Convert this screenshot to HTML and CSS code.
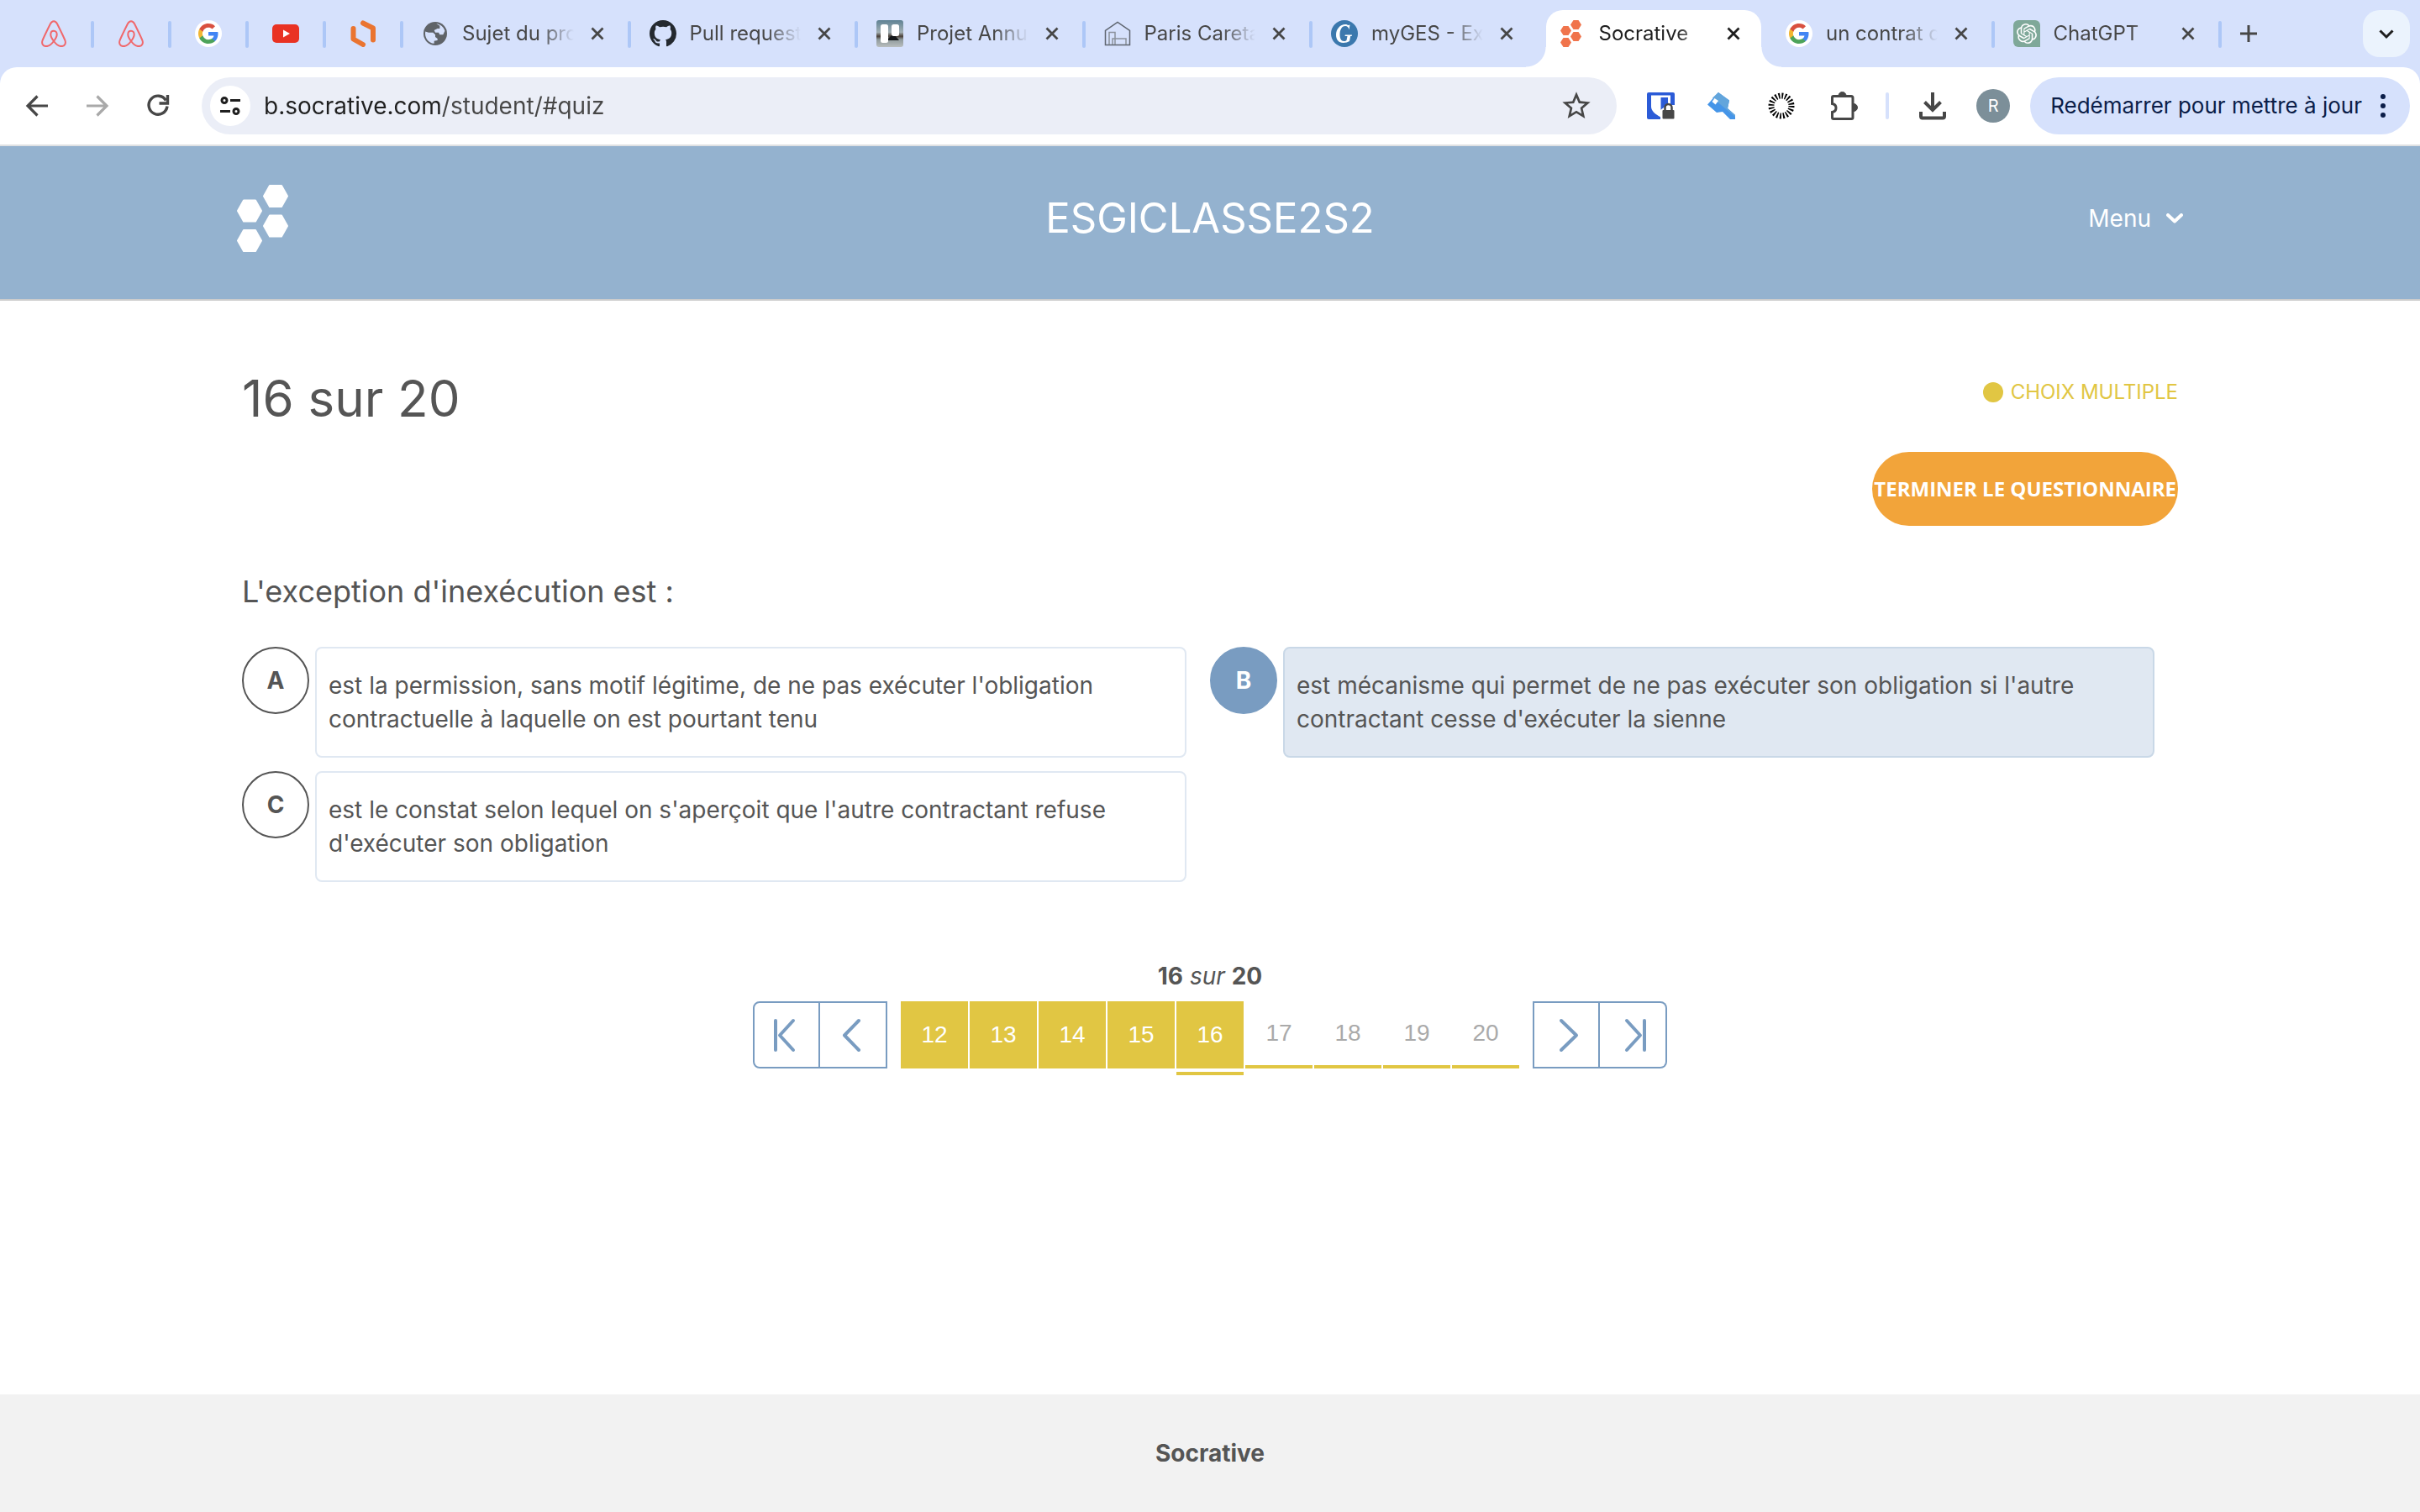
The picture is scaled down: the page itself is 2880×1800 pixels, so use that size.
FILE: index.html
```html
<!DOCTYPE html>
<html lang="fr">
<head>
<meta charset="utf-8">
<meta name="viewport" content="width=device-width, initial-scale=1">
<title>Socrative</title>
<link rel="stylesheet" href="styles.css">
</head>
<body>
<svg class="sprite" aria-hidden="true">
  <symbol id="i-close" viewBox="0 0 16 16"><path d="M1.5 1.5l13 13M14.5 1.5l-13 13" fill="none" stroke="currentColor" stroke-width="2.8"/></symbol>
  <symbol id="i-airbnb" viewBox="0 0 32 32"><path d="M16 1.200c-2 0-3.100 1.300-4 3.100C9.500 9.300 4.500 19.500 2.600 24c-1.400 3.700.4 7 4.400 7.100 3.600 0 6.800-3.100 9-6.100 2.300-3 3.700-5.600 3.700-8.100 0-2.400-1.500-4.200-3.700-4.200s-3.700 1.800-3.700 4.200c0 2.500 1.400 5.100 3.700 8.100 2.200 3 5.400 6.100 9 6.100 4-.1 5.800-3.400 4.400-7.100C27.500 19.500 22.500 9.300 20 4.300c-.9-1.800-2-3.100-4-3.100z" fill="none" stroke="#f0686c" stroke-width="2"/></symbol>
  <symbol id="i-google" viewBox="0 0 32 32"><circle cx="16" cy="16" r="16" fill="#fff"/><g transform="translate(4 4)"><path fill="#4285f4" d="M23.500 12.300c0-.8-.1-1.600-.2-2.300H12v4.500h6.500c-.3 1.500-1.100 2.700-2.400 3.600v3h3.900c2.200-2.100 3.500-5.200 3.500-8.800z"/><path fill="#4da35a" d="M12 24c3.200 0 6-1.100 8-2.900l-3.900-3c-1.100.7-2.500 1.200-4.100 1.200-3.100 0-5.800-2.100-6.700-5H1.300v3.100C3.300 21.300 7.300 24 12 24z"/><path fill="#f2b632" d="M5.300 14.300c-.3-.7-.4-1.500-.4-2.300s.1-1.600.4-2.300V6.600h-4C.5 8.200 0 10.100 0 12s.5 3.800 1.300 5.400z"/><path fill="#d9503f" d="M12 4.800c1.800 0 3.300.6 4.600 1.800l3.400-3.400C18 1.200 15.200 0 12 0 7.300 0 3.300 2.700 1.300 6.600l4 3.100c.9-2.800 3.600-4.900 6.700-4.900z"/></g></symbol>
</svg>

<header class="browser">
  <nav class="tabstrip" aria-label="Onglets">
    <ul class="tabs">
      <li class="tab pinned"><a href="#t1" aria-label="Airbnb"><svg class="fav"><use href="#i-airbnb"/></svg></a></li>
      <li class="tab pinned"><a href="#t2" aria-label="Airbnb"><svg class="fav"><use href="#i-airbnb"/></svg></a></li>
      <li class="tab pinned"><a href="#t3" aria-label="Google"><svg class="fav"><use href="#i-google"/></svg></a></li>
      <li class="tab pinned"><a href="#t4" aria-label="YouTube"><svg class="fav" viewBox="0 0 32 32"><rect y="5" width="32" height="22" rx="5" fill="#e93223"/><path d="M13 11.500v9l8-4.500z" fill="#fff"/></svg></a></li>
      <li class="tab pinned"><a href="#t5" aria-label="Outil"><svg class="fav" viewBox="0 0 32 32"><path d="M16 3l12 6v14" fill="none" stroke="#ea7430" stroke-width="6" stroke-linecap="round" stroke-linejoin="round" transform="translate(0 .5)"/><path d="M4.500 10v12.500l11.500 6.500" fill="none" stroke="#ea7430" stroke-width="6" stroke-linecap="round" stroke-linejoin="round"/></svg></a></li>
      <li class="tab"><a href="#t6"><svg class="fav" viewBox="0 0 24 24"><circle cx="12" cy="12" r="10.500" fill="#5f6368"/><path fill="#d6e1fc" d="M11 20.900c-4.500-.5-8-4.200-8-8.900 0-.6.100-1.200.2-1.800L6 11h4l2 2v2l2 1.500V18l-3 .5zM13 3.200c3.600.4 6.600 3 7.600 6.400L19 13h-3l-1-2h-3l-1-2 3-1.500h2V5z"/></svg><span class="title">Sujet du projet</span></a><button class="close" aria-label="Fermer"><svg><use href="#i-close"/></svg></button></li>
      <li class="tab"><a href="#t7"><svg class="fav" viewBox="0 0 16 16"><path fill="#24292f" d="M8 0C3.580 0 0 3.580 0 8c0 3.540 2.290 6.530 5.470 7.590.4.070.55-.17.55-.38 0-.19-.010-.82-.010-1.490-2.010.37-2.530-.49-2.690-.94-.09-.23-.48-.94-.82-1.130-.28-.15-.68-.52-.010-.53.63-.010 1.080.58 1.230.82.72 1.210 1.870.87 2.330.66.070-.52.28-.87.510-1.070-1.780-.2-3.640-.89-3.640-3.950 0-.87.310-1.590.82-2.150-.08-.2-.36-1.020.08-2.120 0 0 .67-.21 2.200.82.64-.18 1.320-.27 2-.27s1.360.09 2 .27c1.530-1.040 2.200-.82 2.200-.82.44 1.100.16 1.920.08 2.120.51.56.82 1.270.82 2.150 0 3.070-1.870 3.750-3.650 3.950.29.25.54.73.54 1.480 0 1.070-.010 1.930-.010 2.200 0 .21.150.46.55.38A8.013 8.013 0 0 0 16 8c0-4.420-3.580-8-8-8z"/></svg><span class="title">Pull requests</span></a><button class="close" aria-label="Fermer"><svg><use href="#i-close"/></svg></button></li>
      <li class="tab"><a href="#t8"><svg class="fav" viewBox="0 0 32 32"><defs><linearGradient id="sky" x2="0" y2="1"><stop offset="0" stop-color="#5f8294"/><stop offset=".45" stop-color="#a3b0b4"/><stop offset=".6" stop-color="#4a4038"/><stop offset=".72" stop-color="#8f9a9c"/><stop offset="1" stop-color="#b9bebf"/></linearGradient></defs><rect width="32" height="32" rx="3" fill="url(#sky)"/><path d="M12 24l8-8 7 8z" fill="#15181a"/><rect x="5" y="5" width="9" height="22" rx="2.500" fill="#fff"/><rect x="18" y="5" width="9" height="14" rx="2.500" fill="#fff"/></svg><span class="title">Projet Annuel</span></a><button class="close" aria-label="Fermer"><svg><use href="#i-close"/></svg></button></li>
      <li class="tab"><a href="#t9"><svg class="fav" viewBox="0 0 32 32" fill="none"><path d="M1.500 29.500V12.500L16 2.500l14.500 10v17z" stroke="#5f6670" stroke-width="1.500"/><path d="M6 29V14.500h7V29M10 29v-7h16v7" stroke="#8b919b" stroke-width="1.500"/></svg><span class="title">Paris Caretaker</span></a><button class="close" aria-label="Fermer"><svg><use href="#i-close"/></svg></button></li>
      <li class="tab before-active"><a href="#t10"><svg class="fav" viewBox="0 0 32 32"><circle cx="16" cy="16" r="16" fill="#3b78ad"/><path d="M22.500 5.500l-1 6c-.5-3-2-4.500-4.500-4.500-4.500 0-6.500 5-6.500 10 0 4.500 1.500 8 5 8 1.500 0 2.500-.5 3-1l1-5h-3l.3-1.500h8.200l-.3 1.500h-1.500l-1.200 6c-2 1.200-4.500 2-7.500 2-5.500 0-8.500-4-8.500-9.500 0-7 5-12.500 11-12.500 1.500 0 2.500.5 3.500 1z" fill="#fff"/></svg><span class="title">myGES - Extranet</span></a><button class="close" aria-label="Fermer"><svg><use href="#i-close"/></svg></button></li>
      <li class="tab active"><a href="#t11" aria-current="page"><svg class="fav" viewBox="0 0 32 32" fill="#f0744c"><path d="M15.500 0h6l3.500 5.500-3.500 5.500h-6L12 5.500zM15.500 14h6l3.500 5.500-3.500 5.500h-6L12 19.500z" transform="translate(2)"/><path d="M5.500 7h6l3.500 5.500-3.500 5.500h-6L2 12.500zM5.500 21h6l3.500 5.500-3.500 5.500h-6L2 26.500z"/></svg><span class="title">Socrative</span></a><button class="close" aria-label="Fermer"><svg><use href="#i-close"/></svg></button></li>
      <li class="tab"><a href="#t12"><svg class="fav"><use href="#i-google"/></svg><span class="title">un contrat de</span></a><button class="close" aria-label="Fermer"><svg><use href="#i-close"/></svg></button></li>
      <li class="tab"><a href="#t13"><svg class="fav" viewBox="0 0 32 32"><path d="M6 0h20a6 6 0 0 1 6 6v26H6a6 6 0 0 1-6-6V6a6 6 0 0 1 6-6z" fill="#7fa899"/><path transform="translate(4 4)" fill="#fff" d="M22.282 9.821a5.985 5.985 0 0 0-.516-4.911 6.046 6.046 0 0 0-6.510-2.900A6.065 6.065 0 0 0 4.981 4.182a5.985 5.985 0 0 0-3.998 2.900 6.046 6.046 0 0 0 .743 7.097 5.980 5.980 0 0 0 .511 4.911 6.051 6.051 0 0 0 6.515 2.900A5.985 5.985 0 0 0 13.260 24a6.056 6.056 0 0 0 5.772-4.206 5.989 5.989 0 0 0 3.998-2.900 6.056 6.056 0 0 0-.748-7.073zm-9.022 12.608a4.475 4.475 0 0 1-2.876-1.041l.142-.080 4.778-2.758a.795.795 0 0 0 .393-.681v-6.737l2.020 1.169a.071.071 0 0 1 .038.052v5.583a4.504 4.504 0 0 1-4.495 4.494zm-9.661-4.125a4.471 4.471 0 0 1-.535-3.014l.142.085 4.783 2.758a.771.771 0 0 0 .781 0l5.843-3.368v2.332a.080.080 0 0 1-.033.062L9.740 19.950a4.499 4.499 0 0 1-6.141-1.646zM2.341 7.896a4.485 4.485 0 0 1 2.366-1.973V11.600a.766.766 0 0 0 .388.677l5.814 3.354-2.020 1.169a.076.076 0 0 1-.071 0l-4.830-2.787A4.504 4.504 0 0 1 2.341 7.872zm16.596 3.856L13.104 8.364 15.119 7.200a.076.076 0 0 1 .071 0l4.830 2.791a4.494 4.494 0 0 1-.677 8.104v-5.677a.790.790 0 0 0-.407-.667zm2.011-3.023l-.142-.085-4.774-2.782a.776.776 0 0 0-.785 0L9.409 9.230V6.897a.066.066 0 0 1 .028-.062l4.830-2.787a4.499 4.499 0 0 1 6.680 4.660zM8.307 12.863l-2.020-1.164a.080.080 0 0 1-.038-.057V6.074a4.499 4.499 0 0 1 7.376-3.454l-.142.081L8.704 5.459a.795.795 0 0 0-.393.681zm1.098-2.365l2.602-1.500 2.607 1.500v2.999l-2.597 1.500-2.607-1.500z"/></svg><span class="title">ChatGPT</span></a><button class="close" aria-label="Fermer"><svg><use href="#i-close"/></svg></button></li>
    </ul>
    <button class="new-tab" aria-label="Nouvel onglet"><svg viewBox="0 0 20 20"><path d="M10 0v20M0 10h20" stroke="currentColor" stroke-width="3"/></svg></button>
    <button class="tab-search" aria-label="Rechercher dans les onglets"><svg viewBox="0 0 20 20"><path d="M2.500 6.500l7.500 7.500 7.500-7.500" fill="none" stroke="#1f1f1f" stroke-width="3"/></svg></button>
  </nav>

  <div class="toolbar">
    <button class="tool" aria-label="Retour"><svg viewBox="0 0 40 40"><path d="M33 20H9M20.500 8.500L9 20l11.500 11.500" fill="none" stroke="#474747" stroke-width="3.200"/></svg></button>
    <button class="tool" aria-label="Avancer"><svg viewBox="0 0 40 40"><path d="M7 20h24M19.500 8.500L31 20 19.500 31.500" fill="none" stroke="#a9a9a9" stroke-width="3.200"/></svg></button>
    <button class="tool" aria-label="Actualiser"><svg viewBox="0 0 40 40"><path d="M29.500 13.500A11 11 0 1 0 31 20.500" fill="none" stroke="#474747" stroke-width="3.400"/><path d="M31.500 7v10h-10" fill="none" stroke="#474747" stroke-width="3.400"/></svg></button>
    <div class="omnibox">
      <button class="site-info" aria-label="Informations sur le site"><svg viewBox="0 0 24 24" fill="none" stroke="#1f1f1f" stroke-width="3"><circle cx="5" cy="5.500" r="3"/><path d="M12 5.500h12M0 18.500h12"/><circle cx="19" cy="18.500" r="3"/></svg></button>
      <input class="url" type="text" value="b.socrative.com/student/#quiz" aria-label="Adresse">
      <button class="star" aria-label="Ajouter aux favoris"><svg viewBox="0 0 24 24"><path fill="#474747" d="M22 9.240l-7.190-.62L12 2 9.190 8.630 2 9.240l5.460 4.730L5.820 21 12 17.270 18.180 21l-1.630-7.030zM12 15.400l-3.760 2.270 1-4.280-3.320-2.880 4.380-.38L12 6.100l1.710 4.040 4.380.38-3.320 2.880 1 4.280z"/></svg></button>
    </div>
    <div class="extensions">
      <button class="tool" aria-label="Bitwarden"><svg viewBox="0 0 40 40"><rect x="4" y="4" width="33" height="32" rx="2" fill="#2b5bd7"/><path d="M9 7.500h23v13c0 6-5 10-11.500 13C14 30 9 26.500 9 20.500z" fill="#fff"/><path d="M20.500 10H29v10.500c0 4-3.500 7-8.500 9.500z" fill="#2b5bd7"/><path d="M20 37V25l8-6h9v18z" fill="#fff"/><path d="M25.500 26v-4a4 4 0 0 1 8 0v4" fill="none" stroke="#474747" stroke-width="2.500"/><rect x="22.500" y="25" width="14" height="10.500" rx="1" fill="#474747"/></svg></button>
      <button class="tool" aria-label="Extension clé"><svg viewBox="0 0 40 40"><path d="M17 4l13 9.500-2 9.500 9 8v5h-6l-9-9-7 1L4 18.500z" fill="#4595e8"/><path d="M17 4l13 9.500-2 9.500 9 8v2L10 10.500z" fill="#62a5dc"/><path d="M12.500 11l4.500 3-3.500 4.500L9.500 15z" fill="#fff"/></svg></button>
      <button class="tool" aria-label="Extension soleil"><svg viewBox="0 0 40 40"><circle cx="20" cy="20" r="12" fill="none" stroke="#000" stroke-width="7" stroke-dasharray="1.800 1.970"/></svg></button>
      <button class="tool" aria-label="Extensions"><svg viewBox="0 0 40 40"><path d="M10 8.500h21a2 2 0 0 1 2 2V34a1.500 1.500 0 0 1-1.500 1.500H10A1.500 1.500 0 0 1 8.500 34v-6.500c3-.5 4.500-2.500 4.500-5s-1.500-4.500-4.500-5V10A1.500 1.500 0 0 1 10 8.500z" fill="none" stroke="#474747" stroke-width="3"/><path d="M16 8a4.500 4.500 0 0 1 9 0zM34 17.500a4.500 4.500 0 0 1 0 9z" fill="#474747" stroke="#474747"/></svg></button>
    </div>
    <div class="divider"></div>
    <button class="tool" aria-label="Téléchargements"><svg viewBox="0 0 40 40"><path d="M20 4v20M10.500 15.500L20 25l9.500-9.500M6 27v5.500a2 2 0 0 0 2 2h24a2 2 0 0 0 2-2V27" fill="none" stroke="#474747" stroke-width="4"/></svg></button>
    <button class="avatar" aria-label="Profil">R</button>
    <button class="restart">Redémarrer pour mettre à jour<svg viewBox="0 0 6 28" fill="#0b1d48"><circle cx="3" cy="3" r="3"/><circle cx="3" cy="14" r="3"/><circle cx="3" cy="25" r="3"/></svg></button>
  </div>
</header>

<div class="room-bar">
  <a class="logo" href="#home" aria-label="Socrative"><svg viewBox="0 0 62 80" fill="#fff" stroke="#fff" stroke-width="2" stroke-linejoin="round"><path d="M39 1h14l7 12.500-7 12.500H39l-7-12.500zM39 36.500h14L60 49l-7 12.500H39L32 49zM8 18.500h14L29 31l-7 12.500H8L1 31zM8 54h14l7 12.500L22 79H8L1 66.500z"/></svg></a>
  <h1 class="room-name">ESGICLASSE2S2</h1>
  <button class="menu">Menu<svg viewBox="0 0 20 12"><path d="M2 2l8 7.500L18 2" fill="none" stroke="#fff" stroke-width="4" stroke-linecap="round" stroke-linejoin="round"/></svg></button>
</div>

<main class="quiz">
  <div class="quiz-head">
    <h2 class="progress">16 sur 20</h2>
    <div class="quiz-side">
      <p class="kind">CHOIX MULTIPLE</p>
      <button class="finish">TERMINER LE QUESTIONNAIRE</button>
    </div>
  </div>

  <form>
    <fieldset class="question">
      <legend>L'exception d'inexécution est :</legend>
      <div class="answers">
        <label class="answer"><input type="radio" name="answer"><span class="letter">A</span><span class="answer-text">est la permission, sans motif légitime, de ne pas exécuter l'obligation contractuelle à laquelle on est pourtant tenu</span></label>
        <label class="answer"><input type="radio" name="answer" checked><span class="letter">B</span><span class="answer-text">est mécanisme qui permet de ne pas exécuter son obligation si l'autre contractant cesse d'exécuter la sienne</span></label>
        <label class="answer"><input type="radio" name="answer"><span class="letter">C</span><span class="answer-text">est le constat selon lequel on s'aperçoit que l'autre contractant refuse d'exécuter son obligation</span></label>
      </div>
    </fieldset>
  </form>

  <nav class="pager" aria-label="Questions">
    <p class="pager-label"><b>16</b> <i>sur</i> <b>20</b></p>
    <div class="pager-row">
      <div class="jump start">
        <button aria-label="Première question"><svg viewBox="0 0 40 44"><path d="M7 5v35M28 5L12 22.500 28 40"/></svg></button>
        <button aria-label="Question précédente"><svg viewBox="0 0 40 44"><path d="M27 5L10 22.500 27 40"/></svg></button>
      </div>
      <div class="pages">
        <button class="page done">12</button>
        <button class="page done">13</button>
        <button class="page done">14</button>
        <button class="page done">15</button>
        <button class="page done current" aria-current="step">16</button>
        <button class="page">17</button>
        <button class="page">18</button>
        <button class="page">19</button>
        <button class="page">20</button>
      </div>
      <div class="jump end">
        <button aria-label="Question suivante"><svg viewBox="0 0 40 44"><path d="M14 5l18 17.500L14 40"/></svg></button>
        <button aria-label="Dernière question"><svg viewBox="0 0 40 44"><path d="M34 5v35M13 5l16 17.500L13 40"/></svg></button>
      </div>
    </div>
  </nav>
</main>

<footer class="footer">Socrative</footer>
</body>
</html>
```
FILE: styles.css
```css
* { box-sizing: border-box; }

html { height: 100%; }

body {
  margin: 0;
  min-height: 100%;
  display: flex;
  flex-direction: column;
  background: #fff;
  color: #555;
  font-family: Inter, "Liberation Sans", sans-serif;
  font-size: 28px;
  line-height: 40px;
}

button {
  margin: 0;
  padding: 0;
  border: 0;
  background: none;
  color: inherit;
  font: inherit;
  cursor: pointer;
}

svg { display: block; flex: none; }
h1, h2, p, ul, fieldset, legend { margin: 0; padding: 0; border: 0; font-weight: 400; }
ul { list-style: none; }
a { color: inherit; text-decoration: none; }
.sprite { display: none; }

/* Tab strip */
.browser { background: #d6e1fc; color: #474747; }

.tabstrip {
  display: flex;
  align-items: center;
  height: 80px;
  padding: 0 12px 0 20px;
}

.tabs { display: flex; flex: 1; min-width: 0; }

.tab {
  position: relative;
  display: flex;
  align-items: center;
  flex: 1 1 0;
  min-width: 0;
  height: 80px;
  padding: 0 24px 0 22px;
  font-size: 24px;
}

.tab.pinned { flex: 0 0 92px; padding: 0 32px 0 28px; }

.tab::after {
  content: "";
  position: absolute;
  right: 0;
  top: 25px;
  width: 4px;
  height: 32px;
  border-radius: 2px;
  background: #adc7f7;
}

.tab.active::after, .tab.before-active::after { display: none; }

.tab a {
  display: flex;
  align-items: center;
  gap: 16px;
  flex: 1;
  min-width: 0;
}

.fav { width: 32px; height: 32px; }

.title {
  flex: 1;
  min-width: 0;
  overflow: hidden;
  white-space: nowrap;
  -webkit-mask-image: linear-gradient(to left, transparent, #000 40px);
  mask-image: linear-gradient(to left, transparent, #000 40px);
}

.close {
  display: grid;
  place-items: center;
  width: 32px;
  height: 32px;
  margin-left: 12px;
}

.close svg { width: 16px; height: 16px; }

.active { color: #1f1f1f; z-index: 1; }

.active::before {
  content: "";
  position: absolute;
  z-index: -1;
  inset: 12px 7px 0;
  border-radius: 20px 20px 0 0;
  background: #fff;
}

.active a::before, .active a::after {
  content: "";
  position: absolute;
  z-index: -1;
  bottom: 0;
  width: 24px;
  height: 24px;
}

.active a::before {
  left: -17px;
  background: radial-gradient(circle at 0 0, transparent 23px, #fff 24px);
}

.active a::after {
  right: -17px;
  background: radial-gradient(circle at 100% 0, transparent 23px, #fff 24px);
}

.new-tab {
  display: grid;
  place-items: center;
  width: 64px;
  height: 64px;
}

.new-tab svg { width: 20px; height: 20px; }

.tab-search {
  display: grid;
  place-items: center;
  width: 56px;
  height: 56px;
  margin-left: 104px;
  border-radius: 20px;
  background: #ebf3fd;
}

.tab-search svg { width: 20px; height: 20px; }

/* Toolbar */
.toolbar {
  display: flex;
  align-items: center;
  gap: 32px;
  height: 94px;
  padding: 0 12px 0 24px;
  border-bottom: 2px solid #dfe1e3;
  border-radius: 20px 20px 0 0;
  background: #fff;
}

.tool, .avatar { flex: none; width: 40px; height: 40px; }
.tool svg { width: 40px; height: 40px; }

.omnibox {
  display: flex;
  align-items: center;
  flex: 1;
  height: 68px;
  padding: 0 28px 0 10px;
  border-radius: 34px;
  background: #ebeef7;
}

.site-info {
  display: grid;
  place-items: center;
  width: 48px;
  height: 48px;
  border-radius: 50%;
  background: #fff;
}

.site-info svg { width: 24px; height: 24px; }

.url {
  flex: 1;
  min-width: 0;
  height: 48px;
  margin: 0 16px;
  padding: 0;
  border: 0;
  outline: 0;
  font: inherit;
  color: transparent;
  background: linear-gradient(90deg, #1f1f1f 210px, #474747 210px);
  -webkit-background-clip: text;
  background-clip: text;
}

.star svg { width: 40px; height: 40px; }

.extensions { display: flex; gap: 32px; }

.divider {
  width: 4px;
  height: 32px;
  border-radius: 2px;
  background: #d6e1fc;
}

.avatar {
  border-radius: 50%;
  background: #7c8f99;
  color: #fff;
  font-size: 20px;
}

.restart {
  display: flex;
  align-items: center;
  gap: 22px;
  height: 68px;
  margin-left: -8px;
  padding: 0 29px 0 24px;
  border-radius: 34px;
  background: #d6e1fc;
  color: #0b1d48;
  font-size: 26px;
}

.restart svg { width: 6px; height: 28px; }

/* Room bar */
.room-bar {
  display: grid;
  grid-template-columns: 1fr auto 1fr;
  align-items: center;
  height: 184px;
  padding: 0 calc(10% - 6px) 10px;
  border-bottom: 2px solid #ccc;
  background: #94b2cf;
  color: #fff;
}

.logo svg { width: 62px; height: 80px; }
.room-name { font-size: 49px; line-height: 60px; }

.menu {
  display: flex;
  align-items: center;
  gap: 18px;
  justify-self: end;
}

.menu svg { width: 20px; height: 12px; }

/* Quiz */
.quiz { flex: 1; padding: 80px 10% 0; }

.quiz-head {
  display: flex;
  justify-content: space-between;
  align-items: flex-start;
}

.progress { font-size: 60px; line-height: 72px; }

.quiz-side {
  display: flex;
  flex-direction: column;
  align-items: flex-end;
  gap: 51px;
  padding-top: 9px;
}

.kind {
  display: flex;
  align-items: center;
  gap: 9px;
  color: #e1c643;
  font-size: 24px;
}

.kind::before {
  content: "";
  width: 24px;
  height: 24px;
  border-radius: 50%;
  background: #e1c643;
}

.finish {
  height: 88px;
  padding: 0 2px;
  border-radius: 44px;
  background: #f2a43a;
  color: #fff;
  font-family: "Open Sans", sans-serif;
  font-size: 24px;
  font-weight: 700;
}

.question { min-width: 0; padding-top: 54px; }
.question legend { padding-top: 54px; font-size: 36px; line-height: 48px; }

.answers {
  display: grid;
  grid-template-columns: 1fr 1fr;
  row-gap: 16px;
  margin-top: -12px;
}

.answer {
  display: grid;
  grid-template-columns: 80px 1fr;
  column-gap: 7px;
  align-items: start;
  padding-right: 28px;
  cursor: pointer;
}

.answer input {
  grid-area: 1 / 1;
  appearance: none;
  width: 80px;
  height: 80px;
  margin: 0;
  border: 2px solid #555;
  border-radius: 50%;
}

.letter {
  grid-area: 1 / 1;
  line-height: 80px;
  text-align: center;
  font-weight: 700;
}

.answer-text {
  padding: 24px 14px;
  border: 2px solid #e0e8f2;
  border-radius: 8px;
}

.answer input:checked { border-color: #799cc1; background: #799cc1; }
.answer input:checked ~ .letter { color: #fff; }
.answer input:checked ~ .answer-text { border-color: #c9d8e7; background: #e0e8f2; }

/* Pager */
.pager { padding-top: 92px; }
.pager-label { padding-bottom: 10px; text-align: center; }

.pager-row {
  display: flex;
  justify-content: center;
  gap: 16px;
}

.jump { display: flex; }

.jump button {
  display: grid;
  place-items: center;
  width: 80px;
  height: 80px;
  border: 2px solid #799cc1;
}

.jump button + button { border-left: 0; }
.start button:first-child { border-radius: 8px 0 0 8px; }
.end button:last-child { border-radius: 0 8px 8px 0; }

.jump svg {
  width: 40px;
  height: 44px;
  fill: none;
  stroke: #799cc1;
  stroke-width: 4;
  stroke-linecap: round;
  stroke-linejoin: round;
}

.pages { display: flex; gap: 2px; }

.page {
  position: relative;
  width: 80px;
  height: 80px;
  border-bottom: 4px solid #e1c643;
  color: #aaa;
  font-family: "Liberation Sans", Arial, sans-serif;
}

.page.done { border-bottom: 0; background: #e1c643; color: #fff; }

.current::after {
  content: "";
  position: absolute;
  left: 0;
  right: 0;
  top: 84px;
  height: 4px;
  background: #e1c643;
}

.footer {
  padding: 50px 0;
  background: #f2f2f2;
  text-align: center;
  font-weight: 700;
}
```
